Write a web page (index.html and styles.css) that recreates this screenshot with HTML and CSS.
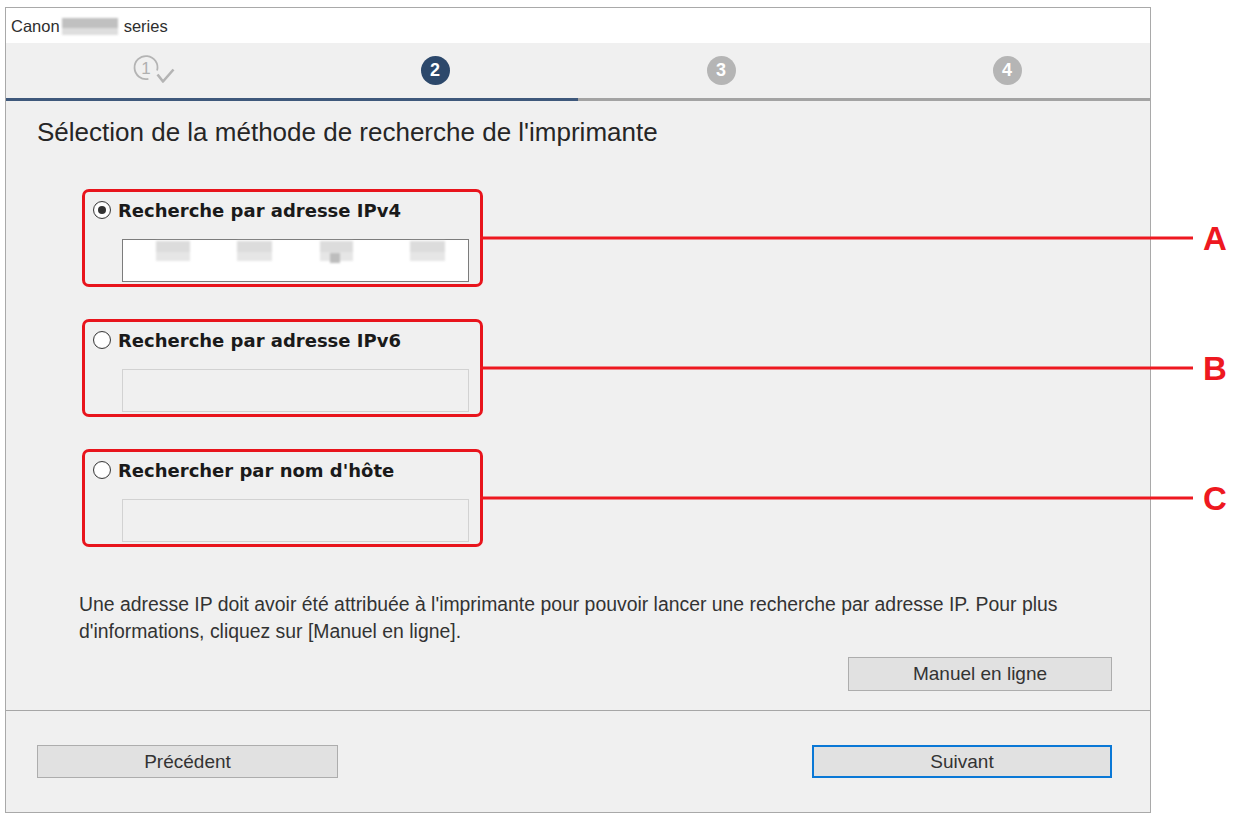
FILE: index.html
```html
<!DOCTYPE html>
<html lang="fr">
<head>
<meta charset="utf-8">
<title>Canon series</title>
<link rel="stylesheet" href="styles.css">
</head>
<body>
<div class="window">
  <div class="titlebar"><span class="t-brand">Canon</span><span class="redact"></span><span>series</span></div>
  <div class="steps">
    <div class="step">
      <svg class="step-done" width="28" height="28" viewBox="0 0 28 28">
        <path d="M22.1 13.6 A11.5 11.5 0 1 0 13.4 21.8" fill="none" stroke="#b4b4b4" stroke-width="1.8"/>
        <text x="11" y="16.8" text-anchor="middle" class="step-done-num">1</text>
        <path d="M22.5 17.5 L28 24.5 L38.5 12.5" fill="none" stroke="#b4b4b4" stroke-width="2.6" stroke-linejoin="round"/>
      </svg>
    </div>
    <div class="step"><span class="dot dot-current">2</span></div>
    <div class="step"><span class="dot dot-todo">3</span></div>
    <div class="step"><span class="dot dot-todo">4</span></div>
  </div>
  <div class="progress"><div class="progress-fill"></div></div>
  <div class="main">
    <h1 class="heading">Sélection de la méthode de recherche de l'imprimante</h1>
    <div class="options">
      <div class="option">
        <div class="radio-row"><span class="radio radio-checked"></span><span class="radio-label">Recherche par adresse IPv4</span></div>
        <div class="field field-active">
          <span class="blot b1"></span><span class="blot b2"></span><span class="blot b3"><span class="blot-dark"></span></span><span class="blot b4"></span>
        </div>
        <div class="callout"><span class="callout-line"></span><span class="callout-letter">A</span></div>
      </div>
      <div class="option">
        <div class="radio-row"><span class="radio"></span><span class="radio-label">Recherche par adresse IPv6</span></div>
        <div class="field"></div>
        <div class="callout"><span class="callout-line"></span><span class="callout-letter">B</span></div>
      </div>
      <div class="option">
        <div class="radio-row"><span class="radio"></span><span class="radio-label">Rechercher par nom d'hôte</span></div>
        <div class="field"></div>
        <div class="callout"><span class="callout-line"></span><span class="callout-letter">C</span></div>
      </div>
    </div>
    <p class="note">Une adresse IP doit avoir été attribuée à l'imprimante pour pouvoir lancer une recherche par adresse IP. Pour plus d'informations, cliquez sur [Manuel en ligne].</p>
    <div class="help-row"><button class="btn btn-help">Manuel en ligne</button></div>
  </div>
  <div class="footer">
    <button class="btn btn-nav">Précédent</button>
    <button class="btn btn-nav btn-default">Suivant</button>
  </div>
</div>
</body>
</html>
```

FILE: styles.css
```css
html, body {
  margin: 0;
  background: #ffffff;
}
body {
  font-family: "Liberation Sans", Arial, sans-serif;
  color: #222222;
}
.window {
  margin: 7px 0 0 5px;
  width: 1144px;
  height: 804px;
  border: 1px solid #a9a9a9;
  background: #f0f0f0;
  display: flex;
  flex-direction: column;
}
.titlebar {
  height: 35px;
  flex: none;
  background: #ffffff;
  display: flex;
  align-items: center;
  padding-left: 5px;
  padding-top: 2px;
  box-sizing: border-box;
  font-size: 16.5px;
  color: #2e2e2e;
}
.t-brand { margin-right: 2px; }
.redact {
  display: inline-block;
  width: 56px;
  height: 17px;
  margin-right: 6px;
  background: linear-gradient(#c0c0c0 0 60%, #dedede 60% 100%);
  filter: blur(1px);
}
.steps {
  height: 55px;
  flex: none;
  display: grid;
  grid-template-columns: repeat(4, 1fr);
  align-items: center;
  justify-items: center;
}
.step {
  width: 28px;
  height: 28px;
  display: flex;
  align-items: center;
  justify-content: center;
}
.step-done { overflow: visible; }
.step-done-num {
  font-family: "Liberation Sans", Arial, sans-serif;
  font-size: 17px;
  fill: #b0b0b0;
}
.dot {
  flex: none;
  width: 29px;
  height: 29px;
  border-radius: 50%;
  display: flex;
  align-items: center;
  justify-content: center;
  color: #ffffff;
  font-weight: bold;
  font-size: 18px;
}
.dot-current { background: #2c486b; }
.dot-todo { background: #b5b5b5; }
.progress {
  height: 3px;
  flex: none;
  background: #a3a3a3;
}
.progress-fill {
  width: 572px;
  height: 100%;
  background: #3e587b;
}
.main {
  flex: 1;
  padding: 0 38px 0 31px;
  display: flex;
  flex-direction: column;
}
.heading {
  margin: 16px 0 0 0;
  font-size: 26px;
  line-height: 30px;
  font-weight: normal;
  color: #262626;
}
.options {
  margin: 42px 0 0 45px;
  display: flex;
  flex-direction: column;
  gap: 32px;
}
.option {
  position: relative;
  box-sizing: border-box;
  width: 401px;
  height: 98px;
  border: 3px solid #e8141c;
  border-radius: 7px;
  padding: 7px 0 0 8px;
}
.radio-row {
  height: 22px;
  display: flex;
  align-items: center;
}
.radio {
  box-sizing: border-box;
  width: 18px;
  height: 18px;
  border-radius: 50%;
  border: 1px solid #3a3a3a;
  background: #ffffff;
  box-shadow: inset 0 0 1px rgba(0,0,0,0.25);
  margin-right: 7px;
  display: flex;
  align-items: center;
  justify-content: center;
}
.radio-checked::after {
  content: "";
  width: 8px;
  height: 8px;
  border-radius: 50%;
  background: #333333;
}
.radio-label {
  font-family: "DejaVu Sans", Verdana, sans-serif;
  font-weight: bold;
  font-size: 18px;
  color: #1a1a1a;
}
.field {
  box-sizing: border-box;
  width: 347px;
  height: 43px;
  margin: 18px 0 0 29px;
  border: 1px solid #d2d2d2;
  background: #f0f0f0;
}
.field-active {
  background: #ffffff;
  border-color: #7c7c7c;
  display: flex;
  align-items: flex-start;
  padding-top: 1px;
}
.blot {
  display: block;
  width: 34px;
  height: 20px;
  background: linear-gradient(#dcdcdc 0 55%, #e6e6e6 55% 100%);
  filter: blur(0.8px);
  position: relative;
}
.b1 { margin-left: 33px; }
.b2 { margin-left: 47px; width: 35px; }
.b3 { margin-left: 48px; width: 33px; }
.b4 { margin-left: 57px; width: 35px; }
.blot-dark {
  position: absolute;
  left: 10px;
  top: 12px;
  width: 10px;
  height: 10px;
  background: #bdbdbd;
}
.callout {
  position: absolute;
  left: 100%;
  top: 50%;
  transform: translateY(-50%);
  display: flex;
  align-items: center;
}
.callout-line {
  display: block;
  width: 713px;
  height: 3px;
  background: #ee1820;
}
.callout-letter {
  margin-left: 10px;
  font-family: "Liberation Sans", Arial, sans-serif;
  font-weight: bold;
  font-size: 33px;
  line-height: 33px;
  color: #ee1820;
}
.note {
  margin: 44px 0 0 42px;
  width: 1033px;
  font-size: 19.4px;
  line-height: 27px;
  color: #333333;
}
.help-row {
  margin-top: 12px;
  display: flex;
  justify-content: flex-end;
}
.btn {
  box-sizing: border-box;
  font-family: "Liberation Sans", Arial, sans-serif;
  font-size: 19px;
  color: #333333;
  background: #e1e1e1;
  border: 1px solid #adadad;
  padding: 0;
}
.btn-help {
  width: 264px;
  height: 34px;
}
.footer {
  height: 102px;
  flex: none;
  box-sizing: border-box;
  border-top: 1px solid #a6a6a6;
  padding: 34px 38px 0 31px;
  display: flex;
  justify-content: space-between;
  align-items: flex-start;
}
.btn-nav {
  width: 301px;
  height: 33px;
}
.btn-default {
  width: 300px;
  border: 2px solid #0a78d6;
}
```
